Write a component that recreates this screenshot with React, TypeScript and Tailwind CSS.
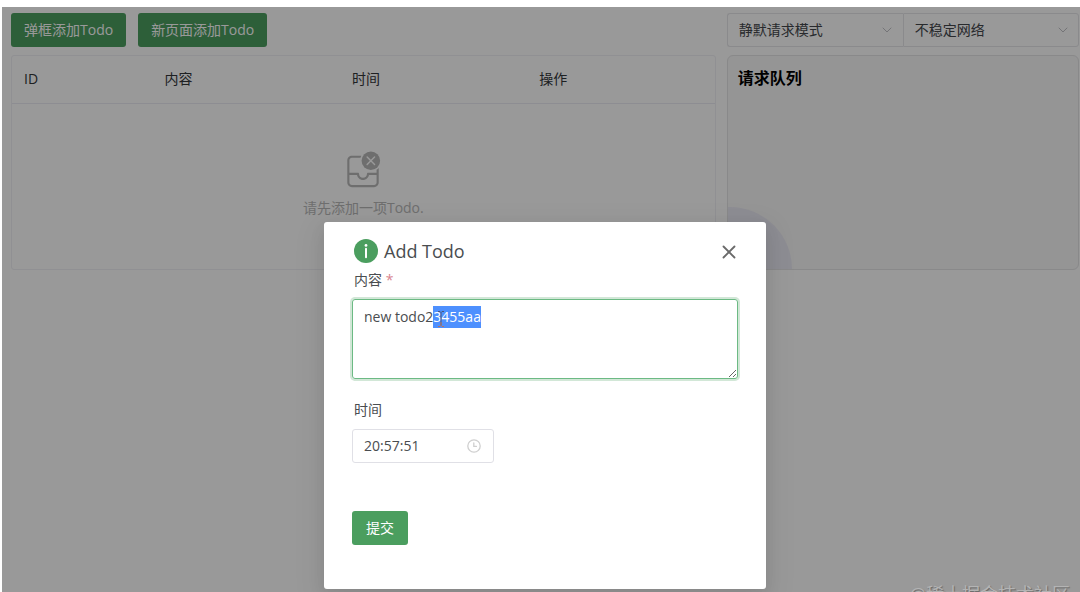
import React, { useEffect, useRef, useState } from "react";
import { ChevronDown, X } from "lucide-react";

const columns = ["ID", "内容", "时间", "操作"];

const EmptyIcon = () => (
  <svg viewBox="0 0 28 28" className="size-10" aria-hidden="true">
    <circle cx="19.5" cy="7.5" r="6.5" fill="currentColor" />
    <path
      d="M16.9 4.9L22.1 10.1M22.1 4.9L16.9 10.1"
      stroke="white"
      strokeWidth="1"
      strokeLinecap="round"
    />
    <path
      fill="currentColor"
      d="M25 22.75V12.6C24.56 13.08 24.05 13.5 23.5 13.85V16H17.5C17.08 16 16.75 16.34 16.75 16.75C16.75 18.27 15.52 19.5 14 19.5C12.48 19.5 11.25 18.27 11.25 16.75C11.25 16.34 10.92 16 10.5 16H4.5V7.25C4.5 6.28 5.28 5.5 6.25 5.5H12.27C12.41 4.97 12.62 4.47 12.87 4H6.25C4.46 4 3 5.46 3 7.25V22.75C3 24.54 4.46 26 6.25 26H21.75C23.54 26 25 24.54 25 22.75ZM4.5 22.75V17.5H9.82C10.2 19.5 11.9 21 14 21C16.1 21 17.82 19.5 18.18 17.5H23.5V22.75C23.5 23.72 22.72 24.5 21.75 24.5H6.25C5.28 24.5 4.5 23.72 4.5 22.75Z"
    />
  </svg>
);

const InfoIcon = () => (
  <svg viewBox="0 0 24 24" className="size-6" aria-hidden="true">
    <circle cx="12" cy="12" r="12" fill="#4b9e5f" />
    <circle cx="12" cy="6.4" r="1.4" fill="white" />
    <path d="M12 9.8V18.2" stroke="white" strokeWidth="2" strokeLinecap="round" />
  </svg>
);

const ClockIcon = () => (
  <svg
    viewBox="0 0 16 16"
    className="size-4 shrink-0 text-[#cfcfcf]"
    fill="none"
    stroke="currentColor"
    strokeWidth="1.3"
    strokeLinecap="round"
    aria-hidden="true"
  >
    <circle cx="8" cy="8" r="6.2" />
    <path d="M7.8 4.8V8.4H10.4" />
  </svg>
);

interface ModeSelectProps {
  label: string;
  options: string[];
  className: string;
}

const ModeSelect = ({ label, options, className }: ModeSelectProps) => (
  <div className="grid flex-1 items-center">
    <select
      aria-label={label}
      className={`col-start-1 row-start-1 h-[34px] w-full appearance-none border border-[#e6e6ea] bg-white px-[11px] text-sm text-[#44474c] ${className}`}
    >
      {options.map((option) => (
        <option key={option}>{option}</option>
      ))}
    </select>
    <ChevronDown
      size={16}
      strokeWidth={1.5}
      className="pointer-events-none col-start-1 row-start-1 mr-2 justify-self-end text-[#c2c2c6]"
    />
  </div>
);

const TodoTable = () => (
  <div className="h-[215px] overflow-hidden rounded-[3px] border border-[#f0f0f5]">
    <table className="w-full table-fixed border-collapse text-sm">
      <thead>
        <tr className="h-[47px] border-b border-[#ececf4] text-left text-[#33363a]">
          {columns.map((column) => (
            <th key={column} className="px-3 font-normal first:w-1/5">
              {column}
            </th>
          ))}
        </tr>
      </thead>
      <tbody>
        <tr>
          <td colSpan={4} className="pt-[46px]">
            <div className="flex flex-col items-center gap-2 text-[#b8b8b8]">
              <EmptyIcon />
              <p>请先添加一项Todo.</p>
            </div>
          </td>
        </tr>
      </tbody>
    </table>
  </div>
);

const AddTodoModal = () => {
  const [content, setContent] = useState("new todo23455aa");
  const [time, setTime] = useState("20:57:51");
  const contentRef = useRef<HTMLTextAreaElement>(null);

  useEffect(() => {
    contentRef.current?.focus();
    contentRef.current?.setSelectionRange(9, 15);
  }, []);

  return (
    <div
      role="dialog"
      aria-labelledby="modal-title"
      className="w-[442px] rounded-[3px] bg-white px-7 pt-[17px] pb-11 text-sm text-[#4a4d50] shadow-[0_6px_16px_rgba(0,0,0,0.08),0_9px_28px_8px_rgba(0,0,0,0.05)]"
    >
      <header className="flex h-6 items-center justify-between pl-0.5">
        <h2 id="modal-title" className="flex items-center gap-1.5 text-lg leading-6">
          <InfoIcon />
          Add Todo
        </h2>
        <button aria-label="Close" className="-mr-0.5 pt-0.5 text-[#6a6a6a]">
          <X size={22} strokeWidth={2} />
        </button>
      </header>

      <form onSubmit={(e) => e.preventDefault()}>
        <label htmlFor="content" className="mt-1.5 mb-2 block pl-0.5 leading-[22px]">
          内容 <span className="text-[#d9848f]">*</span>
        </label>
        <div className="relative">
          <textarea
            id="content"
            ref={contentRef}
            value={content}
            onChange={(e) => setContent(e.target.value)}
            className="block h-20 w-full rounded-[3px] border border-[#6cba84] px-[11px] py-1.5 leading-[22px] shadow-[0_0_0_2px_rgba(75,158,95,0.25)] outline-none selection:bg-[#4d90fe] selection:text-white"
          />
          {/* text cursor */}
          <svg
            viewBox="0 0 8 16"
            className="pointer-events-none absolute top-3 left-[85px] z-10 h-4 w-2"
            fill="none"
            aria-hidden="true"
          >
            <path d="M1 .5H3L4 1.5L5 .5H7M4 1.5V14.5" stroke="#4a5878" />
            <path d="M4 11V14.5M1 15.5H3L4 14.5L5 15.5H7" stroke="#b8765c" />
          </svg>
        </div>

        <label htmlFor="time" className="mt-5 mb-2 block pl-0.5 leading-[22px]">
          时间
        </label>
        <div className="flex h-[34px] w-[142px] items-center rounded-[3px] border border-[#e0e0e6] px-[11px]">
          <input
            id="time"
            value={time}
            onChange={(e) => setTime(e.target.value)}
            className="w-full min-w-0 outline-none"
          />
          <ClockIcon />
        </div>

        <button
          type="submit"
          className="mt-12 block h-[34px] rounded-[3px] bg-[#4b9e5f] px-3.5 text-white"
        >
          提交
        </button>
      </form>
    </div>
  );
};

const App = () => {
  return (
    <div className="flex min-h-screen bg-white pt-[7px] pl-0.5 font-['Open_Sans','Noto_Sans_CJK_SC',sans-serif]">
      <div className="relative flex-1 overflow-hidden">
        <main className="grid grid-cols-[2fr_1fr] gap-x-[11px] gap-y-2 pt-1.5 pr-px pl-[9px]">
          <div className="flex gap-3 text-sm text-white">
            <button className="h-[34px] rounded-[3px] bg-[#4b9e5f] px-[13px]">
              弹框添加Todo
            </button>
            <button className="h-[34px] rounded-[3px] bg-[#4b9e5f] px-[13px]">
              新页面添加Todo
            </button>
          </div>
          <div className="flex">
            <ModeSelect
              label="请求模式"
              options={["静默请求模式"]}
              className="rounded-l-[3px] border-r-0"
            />
            <ModeSelect
              label="网络"
              options={["不稳定网络"]}
              className="rounded-r-[3px]"
            />
          </div>

          <TodoTable />
          <section className="relative h-[215px] overflow-hidden rounded-md border border-[#e4e4e6] bg-[#f8f8f8] px-2.5 pt-2.5">
            <h2 className="text-base font-bold text-black">请求队列</h2>
            <div className="absolute -bottom-[62px] -left-[60px] size-[124px] rounded-full bg-[#ecebf6]" />
          </section>
        </main>

        <div className="absolute inset-0 flex items-start justify-center bg-black/40 pt-[215px] pl-2">
          <AddTodoModal />
        </div>

        <p className="absolute right-2.5 -bottom-4 text-lg text-[#b4b4b4] [text-shadow:1px_1px_1px_#666]">
          @稀土掘金技术社区
        </p>
      </div>
    </div>
  );
};

export default App;
